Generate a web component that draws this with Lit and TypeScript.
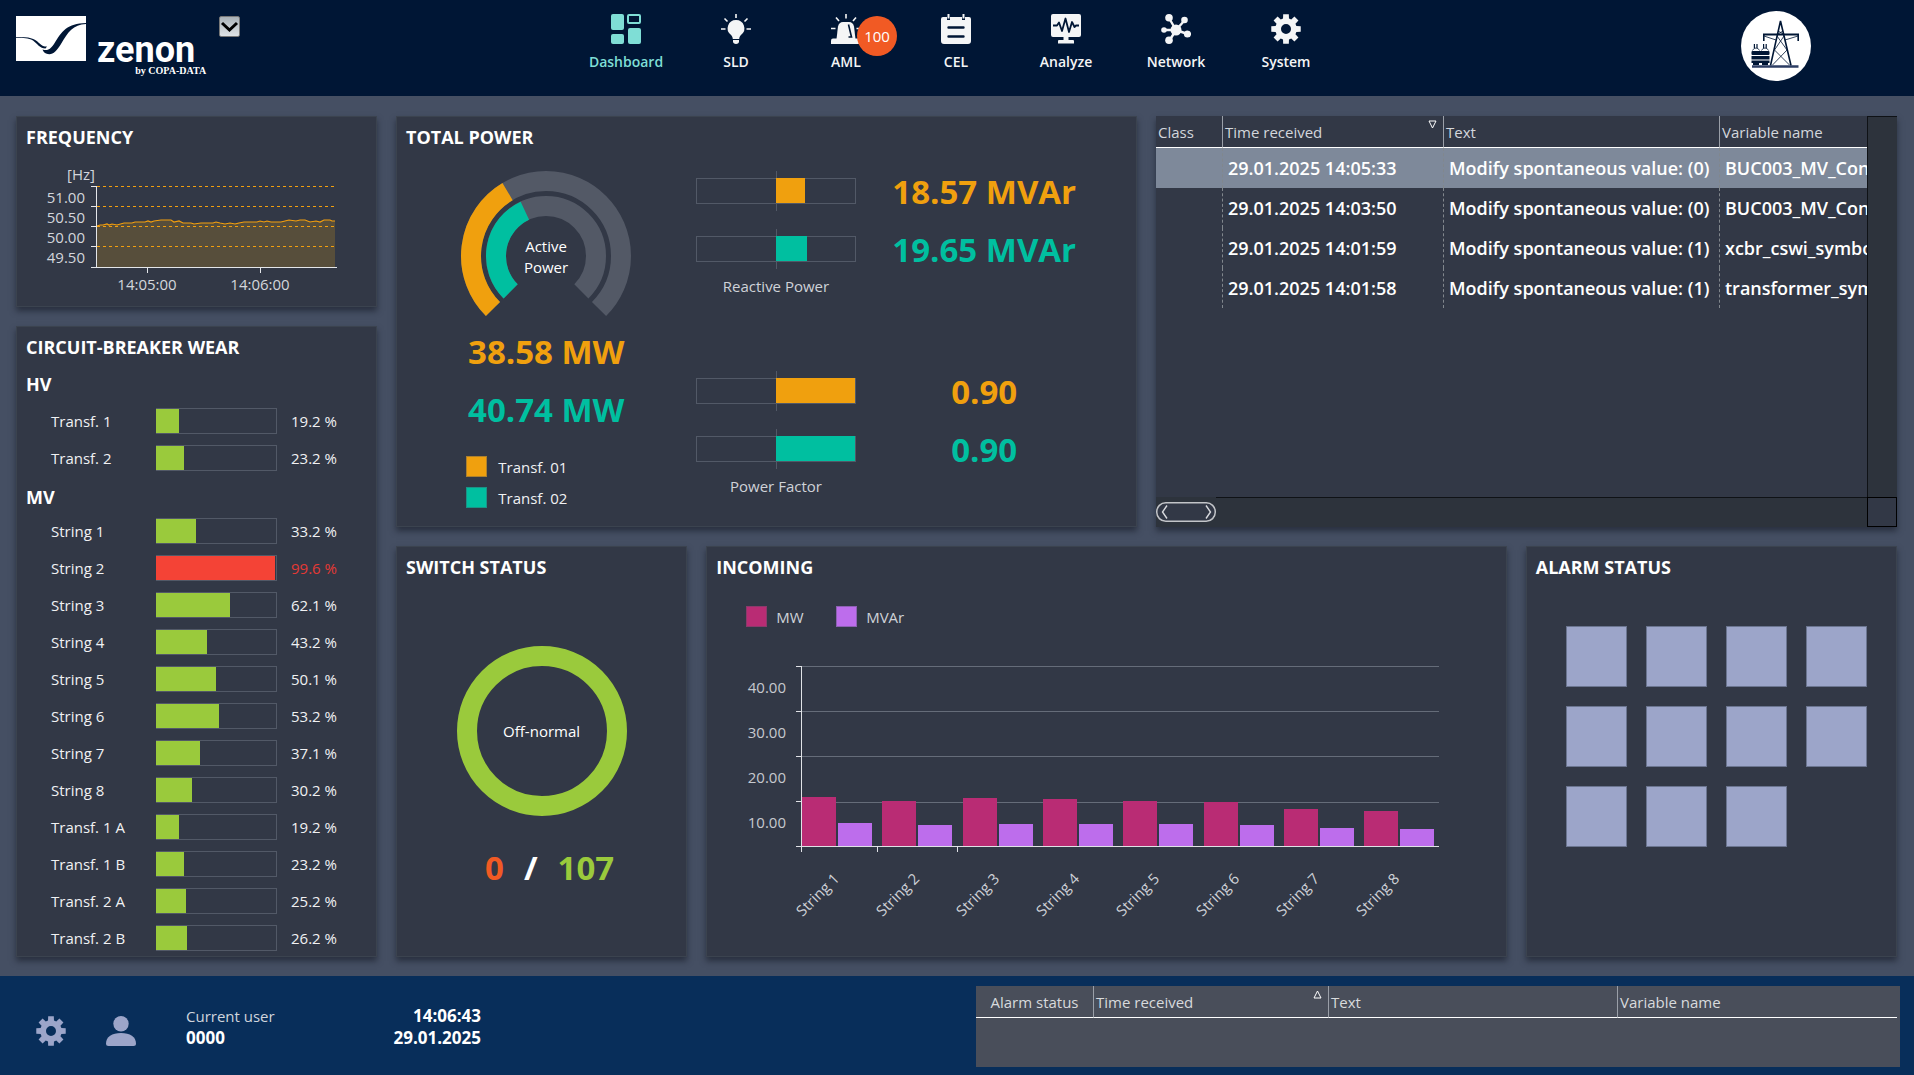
import { LitElement, html, css, svg, nothing } from "lit";
import { customElement, property } from "lit/decorators.js";
import { classMap } from "lit/directives/class-map.js";
import { styleMap } from "lit/directives/style-map.js";

const NAVY = "#001635";

/** Outline of a toothed wheel with a round hole, centred in a 30 x 30 box. */
function gearPath(teeth = 8): string {
  const c = 15;
  const root = 10.8;
  const tip = 15;
  const step = (Math.PI * 2) / teeth;
  const pt = (r: number, a: number) =>
    `${(c + r * Math.sin(a)).toFixed(2)} ${(c - r * Math.cos(a)).toFixed(2)}`;
  const parts: string[] = [];
  for (let i = 0; i < teeth; i++) {
    const a = i * step;
    parts.push(pt(root, a - 0.28), pt(tip, a - 0.19), pt(tip, a + 0.19), pt(root, a + 0.28));
  }
  return `M${parts.join("L")}Z M15 10a5 5 0 1 0 0 10a5 5 0 1 0 0 -10Z`;
}

const gear = svg`<path fill="currentColor" fill-rule="evenodd" d=${gearPath()} />`;

const icons: Record<string, unknown> = {
  dashboard: svg`
    <rect x="0" y="0" width="13" height="16" rx="2" fill="currentColor" />
    <rect x="0" y="20" width="13" height="10" rx="2" fill="currentColor" />
    <rect x="17" y="14" width="13" height="16" rx="2" fill="currentColor" />
    <rect x="17" y="1" width="12" height="8" rx="1" fill="none" stroke="currentColor" stroke-width="2" />`,
  bulb: svg`
    <path fill="currentColor" d="M15 6a8.3 8.3 0 0 0 -5.2 14.8c1.4 1.3 1.8 2.6 2 4.2h6.4c.2-1.6.6-2.9 2-4.2A8.3 8.3 0 0 0 15 6Z" />
    <path fill="currentColor" d="M12 26h6v1.6c0 1.2-1.200 2.400-3 2.400s-3-1.200-3-2.400Z" />
    <path stroke="currentColor" stroke-width="1.600" fill="none" d="M15 0V4M3.500 4.500L6.500 7.500M26.500 4.500L23.500 7.500M0 15H4.500M30 15H25.500" />`,
  siren: svg`
    <path fill="currentColor" d="M5.500 25L7 12.500Q8 8 12 8H18Q22 8 23 12.500L24.500 25Z" />
    <path fill="currentColor" d="M0 30V26.500Q0 24.500 2 24.500H28Q30 24.500 30 26.500V30Z" />
    <path stroke=${NAVY} stroke-width="1.600" fill="none" d="M17.500 10.500L20.500 23H17.500" />
    <path stroke="currentColor" stroke-width="1.600" fill="none" d="M15 0V4.500M5 3.500L8 7M25 3.500L22 7M0 14.500H4.500M30 14.500H25.500" />`,
  list: svg`
    <path fill="currentColor" d="M2 3H6V6H9V3H21V6H24V3H28Q30 3 30 5V27Q30 30 27 30H3Q0 30 0 27V5Q0 3 2 3Z" />
    <path stroke="currentColor" stroke-width="2" d="M7.500 0V4.500M22.500 0V4.500" />
    <path stroke=${NAVY} stroke-width="2.400" stroke-linecap="round" d="M7.500 13.500H22.500M7.500 22.500H22.500" />`,
  monitor: svg`
    <path fill="currentColor" d="M2 0H28Q30 0 30 2V21Q30 23 28 23H17.500V26H22Q23 26 23 27V29.500H7V27Q7 26 8 26H12.500V23H2Q0 23 0 21V2Q0 0 2 0Z" />
    <path stroke=${NAVY} stroke-width="1.800" fill="none" stroke-linejoin="round" d="M2 11.500H6L8 8.500L11 17L14.500 4.500L18 18L21 8L23.500 13L25 11.500H28" />`,
  network: svg`
    <g fill="currentColor" stroke="currentColor" stroke-width="2.400">
      <path d="M15 16L8 4M15 16L23.500 6.500M15 16L3 16M15 16L26.500 20M15 16L8.500 26.500" />
      <g stroke="none">
        <circle cx="15" cy="16" r="5.500" /><circle cx="8" cy="3.800" r="3.800" />
        <circle cx="23.500" cy="6" r="3.300" /><circle cx="3" cy="16" r="2.800" />
        <circle cx="26.500" cy="20" r="3.600" /><circle cx="8" cy="26.200" r="3.800" />
      </g>
    </g>`,
  gear,
  person: svg`
    <circle cx="15" cy="7.700" r="7.700" fill="currentColor" />
    <path fill="currentColor" d="M0 27.500C0 21 6 17 15 17S30 21 30 27.500Q30 30 27.500 30H2.500Q0 30 0 27.500Z" />`,
};

const fontStack = css`"Open Sans", "Noto Sans", sans-serif`;

@customElement("ui-icon")
class UiIcon extends LitElement {
  @property() name = "";
  static styles = css`
    :host { display: block; width: 30px; height: 30px; }
    .glyph { display: block; width: 30px; height: 30px; }
  `;
  render() {
    return html`<svg class="glyph" viewBox="0 0 30 30" aria-hidden="true">${icons[this.name] ?? nothing}</svg>`;
  }
}

@customElement("app-header")
class AppHeader extends LitElement {
  private items = [
    { icon: "dashboard", label: "Dashboard", active: true },
    { icon: "bulb", label: "SLD" },
    { icon: "siren", label: "AML", badge: 100 },
    { icon: "list", label: "CEL" },
    { icon: "monitor", label: "Analyze" },
    { icon: "network", label: "Network" },
    { icon: "gear", label: "System" },
  ] as { icon: string; label: string; active?: boolean; badge?: number }[];

  static styles = css`
    :host { display: block; background: #001635; color: #f4f5f6; font-family: ${fontStack}; }
    .bar { display: grid; grid-template-columns: 1fr auto 1fr; min-height: 96px; padding-right: 2px; }
    .brand { display: flex; align-items: flex-start; padding: 16px 0 0 16px; }
    .mark { display: block; width: 70px; height: 45px; }
    .words { display: flex; flex-direction: column; margin-left: 11px; padding-top: 18px; }
    .name { font: 700 36px/32px Roboto, sans-serif; color: #fff; }
    .by { font: 700 10px/10px "Liberation Serif", serif; color: #fff; align-self: flex-end; margin-right: -11px; white-space: nowrap; }
    .picker { width: 21px; height: 21px; margin-left: 24px; padding: 0; border: 1px solid #777; border-radius: 2px; background: linear-gradient(#a9b1b7, #dfe3e6); }
    .chev { display: block; width: 19px; height: 19px; }
    .nav { display: flex; }
    .item { position: relative; display: flex; flex-direction: column; align-items: center; width: 110px; padding-top: 14px; color: inherit; text-decoration: none; font-size: 14px; font-weight: 600; line-height: 20px; gap: 8px; }
    .active { color: #7fded6; }
    .badge { position: absolute; left: 66px; top: 16px; width: 40px; height: 40px; border-radius: 50%; background: #f15a24; color: #fff; text-align: center; font-size: 15px; line-height: 41px; font-weight: 400; }
    .site { display: flex; justify-content: flex-end; padding: 11px 101px 0 0; }
    .roundel { display: block; width: 70px; height: 70px; }
  `;

  render() {
    return html`
      <header class="bar">
        <div class="brand">
          <svg class="mark" viewBox="0 0 70 45" aria-hidden="true">
            <rect width="70" height="45" fill="#fff" />
            <path fill=${NAVY} d="M0 21C14 21 18 22 23 27C26 30 28 30.500 31 30.500L29.500 32.500C24 32.500 21 27.500 17 24.500C12 22 8 21.800 0 21.800Z" />
            <path fill=${NAVY} d="M26.500 33.500C31 35 34 34 38 28C46 15 51 7.500 70 7V8C57 8.500 52 16 45 28C40 36 36 40 30 37.500C28 36.500 27 35 26.500 33.500Z" />
          </svg>
          <div class="words"><span class="name">zenon</span><span class="by">by COPA-DATA</span></div>
          <button class="picker" aria-label="Open menu">
            <svg class="chev" viewBox="0 0 19 19"><path d="M2 6L9.500 13L17 6" fill="none" stroke="#000" stroke-width="3" /></svg>
          </button>
        </div>
        <nav class="nav">
          ${this.items.map(
            (i) => html`<a href="#" class=${classMap({ item: true, active: !!i.active })}>
              <ui-icon name=${i.icon}></ui-icon>
              <span>${i.label}</span>
              ${i.badge ? html`<span class="badge">${i.badge}</span>` : nothing}
            </a>`,
          )}
        </nav>
        <div class="site">
          <svg class="roundel" viewBox="0 0 70 70" aria-hidden="true">
            <circle cx="35" cy="35" r="35" fill="#fff" />
            <g stroke=${NAVY} fill="none">
              <path stroke-width="1.600" d="M29.500 54.500L39.500 10L50 54.500" />
              <path stroke-width="2.200" d="M22 23.500H58" />
              <path stroke-width="1.600" d="M22.800 23V30M57.200 23V30" />
              <path stroke-width="0.800" d="M23 25L35 29M57 25L44 29M36 25L46 39L31.500 54M43 25L33.500 39L48.500 54M37 20L42.500 23M42 20L37 23" />
              <path stroke="#2c3d63" stroke-width="2.400" d="M11 55.500H57.500" />
            </g>
            <g fill=${NAVY}>
              <rect x="10.500" y="40" width="18" height="4" rx="1" />
              <rect x="10.500" y="45" width="18" height="3.500" />
              <rect x="10.500" y="49.500" width="18" height="2.500" />
              <path d="M12 52H18V54H12ZM21 52H27V54H21Z" />
              <path d="M12.800 33h1.200v4h-1.200zM15.400 33h1.200v4h-1.200zM22 33h1.200v4h-1.200zM24.600 33h1.200v4h-1.200z" />
            </g>
            <path d="M11.500 39.500Q12.500 37 15 37T18.500 39.500M20.500 39.500Q21.500 37 24 37T27.500 39.500" fill="#fff" stroke=${NAVY} stroke-width="0.800" />
          </svg>
        </div>
      </header>`;
  }
}

@customElement("dash-panel")
class DashPanel extends LitElement {
  @property() heading = "";
  static styles = css`
    :host { display: block; box-sizing: border-box; background: #323846; border: 1px solid #3b434f; box-shadow: 0 4px 6px rgba(22, 27, 38, 0.6); color: #fff; font-family: ${fontStack}; min-width: 0; }
    .title { margin: 0; padding: 8px 9px 0; font-size: 18px; font-weight: 700; line-height: 25px; }
  `;
  render() {
    return html`<h2 class="title">${this.heading}</h2><slot></slot>`;
  }
}

@customElement("frequency-chart")
class FrequencyChart extends LitElement {
  private trace = [
    [80, 66], [83, 65], [86, 65], [90, 64], [92, 65], [95, 64], [100, 65], [107, 63], [115, 63], [118, 62], [128, 62], [131, 61], [134, 62],
    [137, 61], [144, 60], [154, 60], [157, 62], [162, 61], [166, 63], [174, 63], [177, 64], [184, 63], [196, 63], [199, 62], [203, 63], [208, 64],
    [213, 63], [218, 64], [222, 63], [227, 62], [240, 62], [243, 61], [247, 62], [250, 61], [254, 62], [264, 62], [268, 61], [272, 60], [279, 61],
    [283, 60], [288, 60], [293, 62], [299, 61], [303, 62], [307, 60], [313, 60], [315, 61], [318, 61],
  ];
  static styles = css`
    :host { display: block; }
    .chart { display: block; width: 340px; height: 135px; margin-top: 10px; font-size: 15px; }
  `;
  render() {
    const pts = this.trace.map((p) => p.join(" ")).join("L");
    const lines = [26, 46, 66, 86];
    return html`<svg class="chart" viewBox="0 0 340 135" role="img" aria-label="Frequency trend">
      <path d="M${pts}L318 107H80Z" fill="#574e3b" />
      <g fill="none" shape-rendering="crispEdges">
        ${lines.map((y) => svg`<path d="M80 ${y + 0.5}H320" stroke="#f39f0e" stroke-dasharray="3 3" />`)}
        <path d="M79.500 26V107.500M74 107.500H320" stroke="#e4e6ea" />
        ${lines.map((y) => svg`<path d="M74 ${y + 0.5}H80" stroke="#e4e6ea" />`)}
        <path d="M130.500 107V113M243.500 107V113" stroke="#e4e6ea" />
      </g>
      <path d="M${pts}" fill="none" stroke="#f39f0e" stroke-width="1.200" />
      <g fill="#d3d6dc">
        <text x="78" y="20" text-anchor="end">[Hz]</text>
        ${["51.00", "50.50", "50.00", "49.50"].map((t, i) => svg`<text x="68" y=${43 + i * 20} text-anchor="end">${t}</text>`)}
        <text x="130" y="130" text-anchor="middle">14:05:00</text>
        <text x="243" y="130" text-anchor="middle">14:06:00</text>
      </g>
    </svg>`;
  }
}

@customElement("wear-list")
class WearList extends LitElement {
  private hv: [string, number][] = [["Transf. 1", 19.2], ["Transf. 2", 23.2]];
  private mv: [string, number][] = [
    ["String 1", 33.2], ["String 2", 99.6], ["String 3", 62.1], ["String 4", 43.2], ["String 5", 50.1], ["String 6", 53.2],
    ["String 7", 37.1], ["String 8", 30.2], ["Transf. 1 A", 19.2], ["Transf. 1 B", 23.2], ["Transf. 2 A", 25.2], ["Transf. 2 B", 26.2],
  ];
  static styles = css`
    :host { display: block; padding-bottom: 5px; }
    .group { margin: 0; padding: 12px 9px; font-size: 18px; font-weight: 700; line-height: 24px; }
    .group.mv { padding: 14px 9px 9px; }
    .rows { list-style: none; margin: 0; padding: 0 0 0 34px; display: grid; gap: 11px; }
    .row { display: grid; grid-template-columns: 105px 121px auto; align-items: center; font-size: 15px; line-height: 26px; color: #f0f1f3; }
    .track { box-sizing: border-box; height: 26px; padding-right: 1px; border: 1px solid #525967; border-left: 0; }
    .fill { height: 24px; background: #9aca3c; }
    .value { padding-left: 14px; }
    .over .fill { background: #f44336; }
    .over .value { color: #e53935; }
  `;
  private rows(list: [string, number][]) {
    return list.map(
      ([name, v]) => html`<li class=${classMap({ row: true, over: v > 90 })}>
        <span>${name}</span>
        <div class="track"><div class="fill" style=${styleMap({ width: `${v}%` })}></div></div>
        <span class="value">${v.toFixed(1)} %</span>
      </li>`,
    );
  }
  render() {
    return html`
      <h3 class="group">HV</h3>
      <ul class="rows">${this.rows(this.hv)}</ul>
      <h3 class="group mv">MV</h3>
      <ul class="rows">${this.rows(this.mv)}</ul>`;
  }
}

@customElement("total-power")
class TotalPower extends LitElement {
  static styles = css`
    :host { display: grid; grid-template-columns: minmax(0, 299fr) minmax(0, 441fr); align-items: start; padding-top: 20px; }
    .active { display: flex; flex-direction: column; width: 172px; margin: 0 auto; }
    .gauge { display: block; width: 172px; height: 148px; font-size: 15px; }
    .big { font-size: 33px; font-weight: 700; line-height: 40px; text-align: center; white-space: nowrap; }
    .active .big { margin-top: 18px; }
    .active .big:nth-child(2) { margin-top: 14px; }
    .t1 { color: #f0a00e; }
    .t2 { color: #00bfa0; }
    .legend { list-style: none; margin: 26px 0 0; padding: 0 0 0 6px; display: grid; gap: 9px; font-size: 15px; line-height: 21px; }
    .key { display: flex; gap: 11px; }
    .key::before { content: ""; box-sizing: border-box; width: 21px; height: 21px; background: currentColor; border: 1px solid rgba(70, 80, 95, 0.4); }
    .key span { color: #f0f1f3; padding-top: 1px; }
    .groups { display: grid; gap: 75px; padding-top: 1px; }
    .group { display: grid; grid-template-columns: minmax(0, 161fr) minmax(0, 256fr) minmax(0, 24fr); row-gap: 18px; }
    .meter { position: relative; display: flex; align-items: center; height: 40px; grid-column: 1; }
    .meter::before { content: ""; position: absolute; left: 50%; top: 0; width: 1px; height: 100%; background: #525967; }
    .track { box-sizing: border-box; flex: 1; height: 26px; border: 1px solid #525967; display: flex; }
    .fill { position: relative; height: 25px; margin-top: -1px; margin-left: 50%; }
    .t1 .fill { background: #f0a00e; }
    .t2 .fill { background: #00bfa0; }
    .group .big { grid-column: 2; padding-top: 1px; line-height: 39px; }
    .caption { grid-column: 1; margin-top: -11px; font-size: 15px; line-height: 20px; text-align: center; color: #cfd2d8; white-space: nowrap; }
  `;

  private arc(r: number, pct: number) {
    const at = (a: number) => `${(86 + r * Math.sin(a)).toFixed(2)} ${(86 - r * Math.cos(a)).toFixed(2)}`;
    const start = (-135 * Math.PI) / 180;
    const sweep = (270 * pct * Math.PI) / 18000;
    return `M${at(start)}A${r} ${r} 0 ${sweep > Math.PI ? 1 : 0} 1 ${at(start + sweep)}`;
  }

  private meter(tone: string, share: number, value: string) {
    return html`
      <div class="meter ${tone}"><div class="track"><div class="fill" style=${styleMap({ width: `${share / 2}%` })}></div></div></div>
      <div class="big ${tone}">${value}</div>`;
  }

  render() {
    return html`
      <div class="active">
        <svg class="gauge" viewBox="0 0 172 148" role="img" aria-label="Active power gauge">
          <g fill="none" stroke-width="20">
            <path d=${this.arc(75, 100)} stroke="#535966" />
            <path d=${this.arc(50, 100)} stroke="#535966" />
            <path d=${this.arc(75, 38.58)} stroke="#f0a00e" />
            <path d=${this.arc(50, 40.74)} stroke="#00bfa0" />
          </g>
          <text fill="#fff" text-anchor="middle"><tspan x="86" y="82">Active</tspan><tspan x="86" y="103">Power</tspan></text>
        </svg>
        <div class="big t1">38.58 MW</div>
        <div class="big t2">40.74 MW</div>
        <ul class="legend">
          <li class="key t1"><span>Transf. 01</span></li>
          <li class="key t2"><span>Transf. 02</span></li>
        </ul>
      </div>
      <div class="groups">
        <div class="group">
          ${this.meter("t1", 37, "18.57 MVAr")} ${this.meter("t2", 39, "19.65 MVAr")}
          <div class="caption">Reactive Power</div>
        </div>
        <div class="group">
          ${this.meter("t1", 100, "0.90")} ${this.meter("t2", 100, "0.90")}
          <div class="caption">Power Factor</div>
        </div>
      </div>`;
  }
}

@customElement("event-list")
class EventList extends LitElement {
  private events = [
    ["29.01.2025 14:05:33", "Modify spontaneous value: (0)", "BUC003_MV_Con"],
    ["29.01.2025 14:03:50", "Modify spontaneous value: (0)", "BUC003_MV_Con"],
    ["29.01.2025 14:01:59", "Modify spontaneous value: (1)", "xcbr_cswi_symbo"],
    ["29.01.2025 14:01:58", "Modify spontaneous value: (1)", "transformer_sym"],
  ];
  static styles = css`
    :host { display: grid; grid-template-columns: minmax(0, 1fr) 30px; grid-template-rows: 1fr 30px; background: #323846; box-shadow: 0 4px 6px rgba(22, 27, 38, 0.6); font-family: ${fontStack}; color: #fff; min-width: 0; }
    .view { overflow: hidden; }
    .events { width: 100%; table-layout: fixed; border-collapse: separate; border-spacing: 0; }
    .c1 { width: 66px; } .c2 { width: 221px; } .c3 { width: 276px; }
    .events th { padding: 1px 2px 0; height: 30px; border-bottom: 1px solid #fff; font-size: 15px; font-weight: 400; line-height: 30px; text-align: left; color: #d3d6dc; white-space: nowrap; }
    .events th + th { border-left: 1px solid #9a9fa8; }
    .events td { padding: 0 0 0 5px; height: 40px; font-size: 18px; font-weight: 600; line-height: 40px; white-space: nowrap; overflow: hidden; }
    .events td + td { border-left: 1px dashed #81878d; }
    .selected { background: #7e899a; }
    .head { display: flex; justify-content: space-between; }
    .sort { width: 9px; height: 9px; margin: 3px 4px 0 0; }
    .vbar { background: #2d333c; border-left: 1px solid #0f1216; border-top: 1px solid #0f1216; }
    .hbar { display: flex; align-items: center; background: #2d333c; }
    .hbar::after { content: ""; flex: 1; align-self: flex-start; border-top: 1px solid #0f1216; }
    .thumb { display: block; width: 60px; height: 20px; }
    .corner { border: 1px solid #000; }
  `;
  render() {
    return html`
      <div class="view">
        <table class="events">
          <colgroup><col class="c1" /><col class="c2" /><col class="c3" /><col /></colgroup>
          <thead>
            <tr>
              <th>Class</th>
              <th><div class="head">Time received<svg class="sort" viewBox="0 0 9 9"><path d="M1 1H8L4.500 8Z" fill="none" stroke="#fff" /></svg></div></th>
              <th>Text</th>
              <th>Variable name</th>
            </tr>
          </thead>
          <tbody>
            ${this.events.map(
              (e, i) => html`<tr class=${i === 0 ? "selected" : ""}><td></td><td>${e[0]}</td><td>${e[1]}</td><td>${e[2]}</td></tr>`,
            )}
          </tbody>
        </table>
      </div>
      <div class="vbar"></div>
      <div class="hbar">
        <svg class="thumb" viewBox="0 0 60 20" aria-hidden="true">
          <rect x="0.750" y="0.750" width="58.500" height="18.500" rx="9" fill="#323846" stroke="#c2c4c8" stroke-width="1.500" />
          <path d="M11 3.500L6.500 10L11 16.500M50 3.500L54.500 10L50 16.500" fill="none" stroke="#d8dade" stroke-width="1.400" />
        </svg>
      </div>
      <div class="corner"></div>`;
  }
}

@customElement("switch-status")
class SwitchStatus extends LitElement {
  static styles = css`
    :host { display: flex; flex-direction: column; align-items: center; padding-top: 66px; }
    .ring { box-sizing: border-box; width: 170px; height: 170px; border: 20px solid #9aca3c; border-radius: 50%; display: grid; place-items: center; font-size: 15px; }
    .count { display: flex; gap: 20px; padding-left: 16px; margin-top: 32px; font-size: 33px; font-weight: 700; line-height: 40px; }
    .bad { color: #f15a24; }
    .good { color: #9aca3c; }
  `;
  render() {
    return html`<div class="ring">Off-normal</div>
      <div class="count"><span class="bad">0</span><span>/</span><span class="good">107</span></div>`;
  }
}

@customElement("incoming-chart")
class IncomingChart extends LitElement {
  private bars = [[49, 23], [45, 21], [48, 22], [47, 22], [45, 22], [44, 21], [37, 18], [35, 17]];
  static styles = css`
    :host { display: block; padding: 26px 0 0 39px; }
    .legend { list-style: none; display: flex; margin: 0; padding: 0; font-size: 15px; line-height: 21px; color: #cfd2d8; }
    .key { display: flex; gap: 9px; width: 90px; }
    .key::before { content: ""; box-sizing: border-box; width: 21px; height: 21px; background: #b92c74; border: 1px solid rgba(70, 80, 95, 0.4); }
    .key.var::before { background: #bd6dec; }
    .key span { padding-top: 1px; }
    .plot { display: block; width: 700px; height: 275px; margin-top: 28px; font-size: 15px; }
  `;
  render() {
    return html`
      <ul class="legend"><li class="key"><span>MW</span></li><li class="key var"><span>MVAr</span></li></ul>
      <svg class="plot" viewBox="0 0 700 275" role="img" aria-label="Incoming power by string">
        <g fill="none" shape-rendering="crispEdges">
          <path stroke="#656c79" d="M55 10.500H693M55 55.500H693M55 100.500H693M55 146.500H693" />
          <path stroke="#e0e2e6" d="M55.500 10V196M50 10.500H55M50 55.500H55M50 100.500H55M50 145.500H55M50 190.500H693M131.500 190V196M211.500 190V196" />
        </g>
        ${this.bars.map(([mw, mvar], i) => {
          const x = 56 + Math.round(i * 80.3);
          return svg`
            <rect x=${x} y=${190 - mw} width="34" height=${mw} fill="#b92c74" />
            <rect x=${x + 36} y=${190 - mvar} width="34" height=${mvar} fill="#bd6dec" />
            <text transform="translate(${74 + i * 80} 241) rotate(-45)" y="2" text-anchor="middle" fill="#cfd2d8">String ${i + 1}</text>`;
        })}
        ${["40.00", "30.00", "20.00", "10.00"].map((t, i) => svg`<text x="40" y=${37 + i * 45} text-anchor="end" fill="#c6c9cf">${t}</text>`)}
      </svg>`;
  }
}

@customElement("alarm-grid")
class AlarmGrid extends LitElement {
  static styles = css`
    :host { display: grid; grid-template-columns: repeat(4, 61px); gap: 19px; padding: 46px 0 0 39px; }
    .cell { box-sizing: border-box; height: 61px; background: #9ca5c9; border: 1px solid #6b7590; }
  `;
  render() {
    return Array.from({ length: 11 }, () => html`<div class="cell"></div>`);
  }
}

@customElement("app-footer")
class AppFooter extends LitElement {
  static styles = css`
    :host { display: grid; grid-template-columns: 976fr 924fr; background: #082e5a; padding: 10px 14px 8px 0; font-family: ${fontStack}; color: #fff; }
    .left { display: flex; align-items: center; height: 81px; padding-left: 36px; box-sizing: border-box; }
    .tool { padding: 0; margin-right: 40px; margin-top: 9px; border: 0; background: none; color: #9ca5c9; }
    .user, .clock { display: flex; flex-direction: column; font-size: 17px; font-weight: 700; line-height: 22px; }
    .user { margin-left: 10px; width: 136px; }
    .clock { width: 159px; text-align: right; }
    .who { font-size: 15px; font-weight: 400; color: #d0d5dd; }
    .alarms { background: #494e5a; padding-right: 3px; }
    .list { width: 100%; table-layout: fixed; border-collapse: separate; border-spacing: 0; }
    .c1 { width: 117px; } .c2 { width: 235px; } .c3 { width: 289px; }
    .list th { padding: 1px 2px 0; height: 30px; border-bottom: 1px solid #fff; font-size: 15px; font-weight: 400; line-height: 30px; text-align: left; color: #d8dadd; white-space: nowrap; }
    .list th + th { border-left: 1px solid #9a9fa8; }
    .list th:first-child { text-align: center; }
    .head { display: flex; justify-content: space-between; }
    .sort { width: 9px; height: 9px; margin: 3px 4px 0 0; }
  `;
  render() {
    return html`
      <div class="left">
        <button class="tool" aria-label="Settings"><ui-icon name="gear"></ui-icon></button>
        <button class="tool" aria-label="User"><ui-icon name="person"></ui-icon></button>
        <div class="user"><span class="who">Current user</span><span>0000</span></div>
        <div class="clock"><span>14:06:43</span><span>29.01.2025</span></div>
      </div>
      <div class="alarms">
        <table class="list">
          <colgroup><col class="c1" /><col class="c2" /><col class="c3" /><col /></colgroup>
          <thead>
            <tr>
              <th>Alarm status</th>
              <th><div class="head">Time received<svg class="sort" viewBox="0 0 9 9"><path d="M1 8H8L4.500 1Z" fill="none" stroke="#fff" /></svg></div></th>
              <th>Text</th>
              <th>Variable name</th>
            </tr>
          </thead>
        </table>
      </div>`;
  }
}

@customElement("app-root")
class AppRoot extends LitElement {
  static styles = css`
    :host { display: flex; flex-direction: column; min-height: 100vh; background: #454f63; font-family: ${fontStack}; }
    .board { flex: 1; display: grid; grid-template-columns: 361fr 1501fr; gap: 19px; padding: 20px 17px 19px 16px; }
    .side { display: grid; grid-template-rows: auto 1fr; gap: 19px; }
    .main { display: grid; grid-template-rows: 1fr 1fr; gap: 19px; min-width: 0; }
    .upper { display: grid; grid-template-columns: 1fr 1fr; gap: 19px; }
    .lower { display: grid; grid-template-columns: 291fr 800fr 371fr; gap: 19px; }
    .trend { padding-bottom: 11px; }
  `;
  render() {
    return html`
      <app-header></app-header>
      <main class="board">
        <div class="side">
          <dash-panel class="trend" heading="FREQUENCY"><frequency-chart></frequency-chart></dash-panel>
          <dash-panel heading="CIRCUIT-BREAKER WEAR"><wear-list></wear-list></dash-panel>
        </div>
        <div class="main">
          <div class="upper">
            <dash-panel heading="TOTAL POWER"><total-power></total-power></dash-panel>
            <event-list></event-list>
          </div>
          <div class="lower">
            <dash-panel heading="SWITCH STATUS"><switch-status></switch-status></dash-panel>
            <dash-panel heading="INCOMING"><incoming-chart></incoming-chart></dash-panel>
            <dash-panel heading="ALARM STATUS"><alarm-grid></alarm-grid></dash-panel>
          </div>
        </div>
      </main>
      <app-footer></app-footer>`;
  }
}
